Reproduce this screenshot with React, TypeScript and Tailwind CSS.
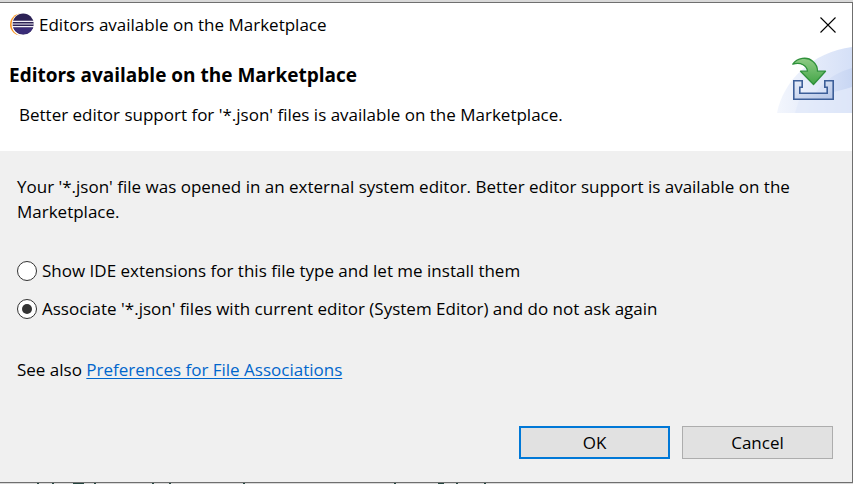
import { useState } from "react";

function EclipseLogo() {
  return (
    <svg viewBox="0 0 24 23" className="h-[23px] w-6 shrink-0" aria-hidden="true">
      <ellipse cx="11" cy="11.5" rx="11" ry="11" fill="#f7941e" />
      <circle cx="13.4" cy="11.5" r="11.8" fill="#fff" />
      <circle cx="13.2" cy="11" r="10.6" fill="#2c2255" />
      <path d="M3.2 14.5h20a10.8 10.8 0 0 1-20 0z" fill="#3a2c78" />
      <path d="M2 8.3h22M2 11h22M2 13.7h22" stroke="#f4f2fa" strokeWidth="1.2" />
    </svg>
  );
}

function InstallBanner() {
  return (
    <svg viewBox="0 0 75 66" className="h-[66px] w-[75px] shrink-0" aria-hidden="true">
      <defs>
        <linearGradient id="halo" x1="0" y1="0" x2="1" y2="0">
          <stop offset="0" stopColor="#f3f6fd" />
          <stop offset="1" stopColor="#d5e0f7" />
        </linearGradient>
        <linearGradient id="sweep" x1="0" y1="0" x2="1" y2="0">
          <stop offset="0" stopColor="#e3eafa" />
          <stop offset="1" stopColor="#c8d6f3" />
        </linearGradient>
        <linearGradient id="leaf" x1="0" y1="0" x2="0" y2="1">
          <stop offset="0" stopColor="#8fcb86" />
          <stop offset="1" stopColor="#42a546" />
        </linearGradient>
        <linearGradient id="tray" x1="0" y1="0" x2="1" y2="1">
          <stop offset="0" stopColor="#e6ecf8" />
          <stop offset="1" stopColor="#b5c5e6" />
        </linearGradient>
      </defs>
      <path d="M0 66C6 34 35 5 75 0V66Z" fill="url(#halo)" />
      <path d="M31 66C34 45 50 28 75 21V66Z" fill="url(#sweep)" />
      <path d="M23 50C45 48 62 44 75 40V66H18Z" fill="#e2eafa" opacity="0.8" />
      <path
        d="M16.8 33.8H25.2V40.2H22.8V46.2H50.2V40.2H47.8V33.8H56.2V52.2H16.8Z"
        fill="url(#tray)"
        stroke="#3d5f99"
        strokeWidth="1.6"
      />
      <path
        d="M15.8 17.2C20 11 30 9 36 14.5C39 17 40.5 20 40.5 24.2H48.5L36.5 37.5L23.5 24.2H30.5C30 19 24 14.5 15.8 17.2Z"
        fill="url(#leaf)"
        stroke="#2f913b"
        strokeWidth="1.3"
        strokeLinejoin="round"
      />
    </svg>
  );
}

const choices = [
  { id: "show", label: "Show IDE extensions for this file type and let me install them" },
  {
    id: "associate",
    label: "Associate '*.json' files with current editor (System Editor) and do not ask again",
  },
];

export default function App() {
  const [choice, setChoice] = useState("associate");
  return (
    <div className="flex min-h-screen flex-col bg-[#d9d9d9] pt-0.5 font-['Open_Sans','Noto_Sans',sans-serif] text-[17px] leading-[25px] text-black">
      <main className="flex flex-1 flex-col border-y border-r border-[#6f6f6f] bg-[#f0f0f0]">
        <div className="bg-white">
          <header className="flex h-[43px] items-center justify-between pr-4 pl-2.5">
            <div className="flex items-center gap-[5px]">
              <EclipseLogo />
              <span>Editors available on the Marketplace</span>
            </div>
            <button type="button" aria-label="Close">
              <svg viewBox="0 0 16 16" className="size-4" fill="none" stroke="#000" strokeWidth="1.1">
                <path d="M.5.5l15 15M15.5.5l-15 15" />
              </svg>
            </button>
          </header>
          <div className="flex items-start justify-between pt-px">
            <div className="pt-4 pb-6 pl-[9px]">
              <h1 className="text-[19px] leading-[25px] font-bold">Editors available on the Marketplace</h1>
              <p className="pt-3.5 pl-2.5">
                Better editor support for '*.json' files is available on the Marketplace.
              </p>
            </div>
            <InstallBanner />
          </div>
        </div>

        <form className="flex flex-1 flex-col px-[17px] pt-[23px]" onSubmit={(e) => e.preventDefault()}>
          <p>
            Your '*.json' file was opened in an external system editor. Better editor support is available on
            the Marketplace.
          </p>
          <div className="flex flex-col gap-[13px] pt-[34px]">
            {choices.map((c) => (
              <label key={c.id} className="flex items-center gap-[5px]">
                <input
                  type="radio"
                  name="choice"
                  value={c.id}
                  checked={choice === c.id}
                  onChange={() => setChoice(c.id)}
                  className="grid size-5 shrink-0 appearance-none place-items-center rounded-full border border-[#333] bg-white before:size-2.5 before:rounded-full checked:before:bg-[#333]"
                />
                <span>{c.label}</span>
              </label>
            ))}
          </div>
          <p className="pt-9">
            See also{" "}
            <a href="#associations" className="text-[#0066cc] underline decoration-1 underline-offset-2">
              Preferences for File Associations
            </a>
          </p>
          <div className="mt-auto flex justify-end gap-3 pr-0.5 pb-[23px]">
            <button type="submit" className="h-[33px] w-[151px] border-2 border-[#0078d7] bg-[#e1e1e1]">
              OK
            </button>
            <button type="button" className="h-[33px] w-[151px] border border-[#adadad] bg-[#e1e1e1]">
              Cancel
            </button>
          </div>
        </form>
      </main>
      <svg className="h-px w-full" aria-hidden="true">
        <path
          d="M37 .5h2M52 .5h2M73 .5h11M94 .5h2M152 .5h2M169 .5h2M243 .5h2M394 .5h2M438 .5h6M456 .5h2M484 .5h2"
          stroke="#24453f"
        />
      </svg>
    </div>
  );
}
